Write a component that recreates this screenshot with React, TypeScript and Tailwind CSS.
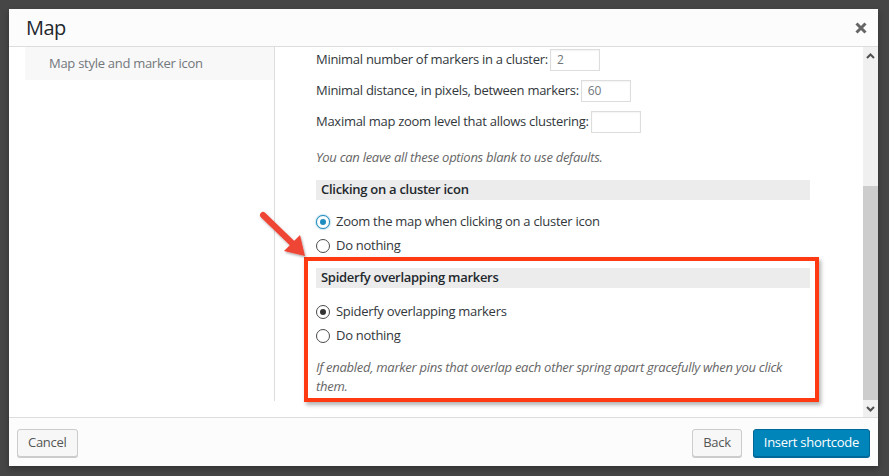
import React from 'react';

const labelRows = [
  { label: 'Minimal number of markers in a cluster:', value: '2' },
  { label: 'Minimal distance, in pixels, between markers:', value: '60' },
  { label: 'Maximal map zoom level that allows clustering:', value: '' },
];

const Radio = ({ checked, tone = 'dark' }: { checked?: boolean; tone?: 'dark' | 'blue' }) => (
  <span
    className={`flex h-[14px] w-[14px] shrink-0 items-center justify-center rounded-full border bg-white ${
      tone === 'blue' ? 'border-[#1e8cbe] shadow-[0_0_2px_rgba(30,140,190,0.8)]' : 'border-[#4a4a4a]'
    }`}
  >
    {checked && (
      <span className={`h-[6px] w-[6px] rounded-full ${tone === 'blue' ? 'bg-[#1e8cbe]' : 'bg-[#333]'}`} />
    )}
  </span>
);

const RadioRow = ({ label, checked, tone }: { label: string; checked?: boolean; tone?: 'dark' | 'blue' }) => (
  <label className="flex h-[24px] items-center gap-[6px] text-[13px] text-[#32373c]">
    <Radio checked={checked} tone={tone} />
    <span>{label}</span>
  </label>
);

const SectionHeading = ({ children }: { children: React.ReactNode }) => (
  <div className="flex h-[20px] items-center bg-[#ececec] px-[5px] text-[13px] font-semibold text-[#23282d]">
    {children}
  </div>
);

const Chevron = ({ down }: { down?: boolean }) => (
  <svg width="9" height="6" viewBox="0 0 9 6" className={down ? 'rotate-180' : ''}>
    <path d="M1 5 L4.5 1.5 L8 5" fill="none" stroke="#505050" strokeWidth="2" />
  </svg>
);

export default function App() {
  return (
    <div className="relative h-[476px] w-[889px] overflow-hidden bg-[#464646] font-['Open_Sans',sans-serif] tracking-[-0.28px]">
      {/* dialog */}
      <div className="absolute left-[9px] top-[9px] flex h-[457px] w-[869px] flex-col bg-white shadow-[0_3px_6px_rgba(0,0,0,0.3)]">
        <div className="flex h-[38px] shrink-0 items-center justify-between border-b border-[#dddddd] bg-[#fcfcfc] pl-[17px] pr-[11px]">
          <h1 className="text-[20px] leading-none tracking-[-0.6px] text-[#23282d]">Map</h1>
          <svg width="12" height="12" viewBox="0 0 12 12">
            <path d="M1.5 1.5 L10.5 10.5 M10.5 1.5 L1.5 10.5" stroke="#666" strokeWidth="3" />
          </svg>
        </div>

        <div className="flex h-[370px] shrink-0">
          {/* sidebar */}
          <div className="w-[266px] shrink-0 pl-[16px]">
            <div className="h-[354px] border-r border-[#dddddd]">
              <div className="flex h-[33px] items-center bg-[#f8f8f8] pl-[24px] text-[13px] text-[#72777c]">
                Map style and marker icon
              </div>
            </div>
          </div>

          {/* settings */}
          <div className="relative flex-1 overflow-hidden pl-[41px] pr-[53px] pt-[2px] text-[13px] text-[#32373c]">
            <div className="flex flex-col gap-[9px]">
              {labelRows.map((row) => (
                <div key={row.label} className="flex h-[22px] items-center">
                  <span>{row.label}</span>
                  <span className="ml-[2px] flex h-[22px] w-[50px] items-center border border-[#dddddd] px-[6px] text-[12px] text-[#72777c] shadow-[inset_0_1px_2px_rgba(0,0,0,0.05)]">
                    {row.value}
                  </span>
                </div>
              ))}
            </div>

            <p className="mt-[15px] text-[13px] leading-[19px] italic text-[#666]">
              You can leave all these options blank to use defaults.
            </p>

            <div className="mt-[13px]">
              <SectionHeading>Clicking on a cluster icon</SectionHeading>
              <div className="mt-[10px]">
                <RadioRow label="Zoom the map when clicking on a cluster icon" checked tone="blue" />
                <RadioRow label="Do nothing" />
              </div>
            </div>

            <div className="-ml-[12px] -mr-[9px] mt-[-1px] border-[4px] border-[#ff3a12] pb-[2px] pl-[8px] pr-[5px] pt-[7px] shadow-[2px_3px_4px_rgba(0,0,0,0.3)]">
              <SectionHeading>Spiderfy overlapping markers</SectionHeading>
              <div className="mt-[12px]">
                <RadioRow label="Spiderfy overlapping markers" checked />
                <RadioRow label="Do nothing" />
              </div>
              <p className="mt-[10px] text-[13px] leading-[19px] italic text-[#666]">
                If enabled, marker pins that overlap each other spring apart gracefully when you click
                <br />
                them.
              </p>
            </div>
          </div>

          {/* scrollbar */}
          <div className="flex w-[15px] shrink-0 flex-col bg-[#f0f0f0]">
            <div className="flex h-[17px] items-center justify-center">
              <Chevron />
            </div>
            <div className="flex flex-1 flex-col">
              <div className="h-[122px]" />
              <div className="flex-1 bg-[#cdcdcd]" />
            </div>
            <div className="flex h-[17px] items-center justify-center">
              <Chevron down />
            </div>
          </div>
        </div>

        <div className="flex flex-1 items-center justify-between border-t border-[#dddddd] bg-[#fcfcfc] px-[8px] pt-[1px]">
          <button className="h-[28px] rounded-[3px] border border-[#cccccc] bg-[#f7f7f7] px-[10px] text-[13px] text-[#555] shadow-[0_1px_0_#cccccc]">
            Cancel
          </button>
          <div className="flex gap-[11px]">
            <button className="h-[28px] rounded-[3px] border border-[#cccccc] bg-[#f7f7f7] px-[10px] text-[13px] text-[#555] shadow-[0_1px_0_#cccccc]">
              Back
            </button>
            <button className="h-[28px] rounded-[3px] border border-[#006799] bg-[#0085ba] px-[10px] text-[13px] text-white shadow-[0_1px_0_#006799]">
              Insert shortcode
            </button>
          </div>
        </div>
      </div>

      {/* annotation arrow */}
      <svg className="absolute left-[255px] top-[205px]" width="60" height="60" viewBox="0 0 60 60">
        <defs>
          <filter id="arrowShadow" x="-20%" y="-20%" width="140%" height="140%">
            <feDropShadow dx="1" dy="1.5" stdDeviation="1.2" floodColor="#000" floodOpacity="0.35" />
          </filter>
        </defs>
        <g filter="url(#arrowShadow)">
          <path d="M8 10 L38 39" stroke="#ee4435" strokeWidth="6" strokeLinecap="round" />
          <path d="M50 51 L29 46 L45 30 Z" fill="#ee4435" />
        </g>
      </svg>
    </div>
  );
}
